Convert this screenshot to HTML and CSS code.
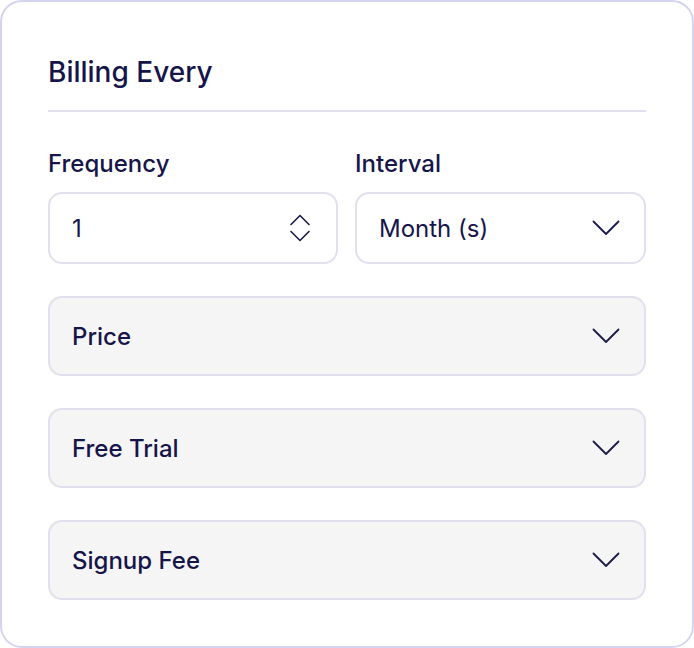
FILE: index.html
```html
<!DOCTYPE html>
<html lang="en">
  <head>
    <meta charset="UTF-8" />
    <meta name="viewport" content="width=device-width, initial-scale=1.0" />
    <title>Billing Every</title>
    <link rel="stylesheet" href="styles.css">
  </head>
  <body>
    <div class="card">
      <h2 class="card-title">Billing Every</h2>

      <div class="fields">
        <div class="field">
          <label for="frequency">Frequency</label>
          <div class="control">
            <span class="value">1</span>
            <svg class="stepper" width="20" height="28" viewBox="0 0 20 28" fill="none" stroke="#1b1a4a" stroke-width="1.6" stroke-linecap="round" stroke-linejoin="round">
              <path d="M1 10.5 L10 1.5 L19 10.5" />
              <path d="M1 17.5 L10 26.5 L19 17.5" />
            </svg>
          </div>
        </div>
        <div class="field">
          <label for="interval">Interval</label>
          <div class="control">
            <span class="value">Month (s)</span>
            <svg class="chevron" width="28" height="16" viewBox="0 0 28 16" fill="none" stroke="#1b1a4a" stroke-width="1.8" stroke-linecap="round" stroke-linejoin="round">
              <path d="M1.5 1.5 L14 14 L26.5 1.5" />
            </svg>
          </div>
        </div>
      </div>

      <div class="panel">
        <span>Price</span>
        <svg class="chevron" width="28" height="16" viewBox="0 0 28 16" fill="none" stroke="#1b1a4a" stroke-width="1.8" stroke-linecap="round" stroke-linejoin="round">
          <path d="M1.5 1.5 L14 14 L26.5 1.5" />
        </svg>
      </div>
      <div class="panel">
        <span>Free Trial</span>
        <svg class="chevron" width="28" height="16" viewBox="0 0 28 16" fill="none" stroke="#1b1a4a" stroke-width="1.8" stroke-linecap="round" stroke-linejoin="round">
          <path d="M1.5 1.5 L14 14 L26.5 1.5" />
        </svg>
      </div>
      <div class="panel">
        <span>Signup Fee</span>
        <svg class="chevron" width="28" height="16" viewBox="0 0 28 16" fill="none" stroke="#1b1a4a" stroke-width="1.8" stroke-linecap="round" stroke-linejoin="round">
          <path d="M1.5 1.5 L14 14 L26.5 1.5" />
        </svg>
      </div>
    </div>
  </body>
</html>
```

FILE: styles.css
```css
body {
  margin: 0;
  background-color: #ffffff;
  font-family: Inter, "Noto Sans", sans-serif;
  color: #16154a;
}
.card {
  box-sizing: border-box;
  width: 694px;
  height: 648px;
  border: 2px solid #d5d4f0;
  border-radius: 22px;
  padding: 50px 46px 0 46px;
  background-color: #ffffff;
}
.card-title {
  margin: 0;
  font-size: 28px;
  font-weight: 500;
  line-height: 40px;
  padding-bottom: 18px;
  border-bottom: 2px solid #e2e0ee;
}
.fields {
  display: grid;
  grid-template-columns: 290px 1fr;
  column-gap: 17px;
  margin-top: 38px;
}
.field label {
  display: block;
  font-size: 24px;
  font-weight: 500;
  line-height: 28px;
  margin-bottom: 14px;
}
.control {
  box-sizing: border-box;
  height: 72px;
  border: 2px solid #e2e0ee;
  border-radius: 14px;
  display: flex;
  align-items: center;
  justify-content: space-between;
  padding: 0 24px 0 22px;
  font-size: 24px;
}
.stepper {
  margin-right: 2px;
}
.panel {
  box-sizing: border-box;
  height: 80px;
  margin-top: 32px;
  border: 2px solid #e2e0ee;
  border-radius: 14px;
  background-color: #f5f5f5;
  display: flex;
  align-items: center;
  justify-content: space-between;
  padding: 0 24px 0 22px;
  font-size: 24px;
  font-weight: 500;
}
```
